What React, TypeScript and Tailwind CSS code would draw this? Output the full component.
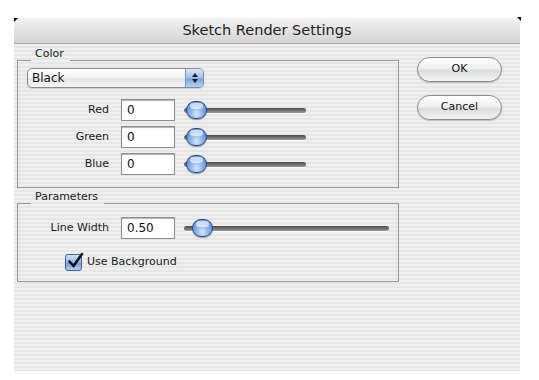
import React from 'react';

const font = { fontFamily: '"DejaVu Sans", "Liberation Sans", sans-serif' };

const Slider: React.FC<{ width: string; knob: string }> = ({ width, knob }) => (
  <div className={`relative ${width} h-[20px] flex items-center`}>
    <div className="w-full h-[5px] rounded-full bg-[linear-gradient(to_bottom,#4a4a4a,#7a7a7a_60%,#9a9a9a)] shadow-[0_1px_0_#fff]" />
    <div
      className={`absolute top-[1px] ${knob} w-[21px] h-[18px] rounded-full border border-[#2c4a85] bg-[radial-gradient(ellipse_at_50%_75%,#d6e8fb_0%,#8ab4ea_45%,#4f80cc_100%)] shadow-[0_1px_1px_rgba(0,0,0,0.35)]`}
    >
      <div className="mx-auto mt-[1px] w-[13px] h-[6px] rounded-full bg-white/60" />
    </div>
  </div>
);

const GroupBox: React.FC<{ title: string; labelWidth: string; height: string; children: React.ReactNode }> = ({
  title,
  labelWidth,
  height,
  children,
}) => (
  <div className="flex flex-col">
    <div className="flex items-end h-[14px]">
      <div className="w-[14px] h-px bg-[#9a9a9a]" />
      <span className={`${labelWidth} px-[4px] text-[11px] leading-[14px] text-[#1a1a1a]`}>{title}</span>
      <div className="flex-1 h-px bg-[#9a9a9a]" />
    </div>
    <div className={`${height} border-x border-b border-[#9a9a9a]`}>{children}</div>
  </div>
);

const Field: React.FC<{ value: string }> = ({ value }) => (
  <div className="w-[54px] h-[22px] bg-white border border-[#8c8c8c] shadow-[inset_0_1px_1px_rgba(0,0,0,0.3)] pl-[5px] flex items-center text-[12px] text-[#111]">
    {value}
  </div>
);

const ColorRow: React.FC<{ label: string }> = ({ label }) => (
  <div className="flex items-center h-[22px]">
    <span className="w-[91px] text-right text-[11px] text-[#1a1a1a]">{label}</span>
    <div className="ml-[12px]">
      <Field value="0" />
    </div>
    <div className="ml-[9px]">
      <Slider width="w-[122px]" knob="left-[2px]" />
    </div>
  </div>
);

const AquaButton: React.FC<{ label: string }> = ({ label }) => (
  <div className="w-[85px] h-[25px] rounded-full border border-[#8a8a8a] bg-[linear-gradient(to_bottom,#ffffff,#f0f0f0_45%,#dcdcdc_55%,#f4f4f4)] shadow-[0_1px_1px_rgba(0,0,0,0.2)] flex items-center justify-center text-[11px] text-[#111]">
    {label}
  </div>
);

export default function App() {
  return (
    <div className="w-[539px] h-[380px] bg-white pt-[18px] pl-[14px]" style={font}>
      <div className="relative w-[506px] h-[353px] flex flex-col">
        {/* title bar */}
        <div className="h-[26px] border-b border-[#a6a6a6] bg-[linear-gradient(to_bottom,#f2f2f2,#e2e2e2_50%,#d4d4d4)] flex items-center justify-center text-[14.5px] text-[#222]">
          Sketch Render Settings
        </div>
        <div className="absolute top-0 left-0 w-0 h-0 border-t-[4px] border-r-[4px] border-t-black border-r-transparent" />
        <div className="absolute top-[-1px] right-[-1px] w-0 h-0 border-t-[4px] border-l-[4px] border-t-black border-l-transparent" />

        {/* body */}
        <div className="flex-1 flex pl-[3px] pt-[3px] bg-[repeating-linear-gradient(to_bottom,#efefef_0px,#efefef_2px,#e6e6e6_2px,#e6e6e6_4px)]">
          <div className="w-[382px] flex flex-col">
            <GroupBox title="Color" labelWidth="w-[39px]" height="h-[127px]">
              <div className="pl-[9px] pt-[7px]">
                <div className="w-[177px] h-[20px] rounded-[5px] border border-[#8a8a8a] bg-[linear-gradient(to_bottom,#ffffff,#f1f1f1_50%,#e4e4e4_55%,#f6f6f6)] flex overflow-hidden shadow-[0_1px_1px_rgba(0,0,0,0.15)]">
                  <span className="flex-1 pl-[4px] text-[12px] leading-[18px] text-[#111]">Black</span>
                  <div className="w-[18px] border-l border-[#7d95bd] bg-[linear-gradient(to_bottom,#d7e6fa,#9dc0ee_50%,#7aa6e4_55%,#b6d2f5)] flex flex-col items-center justify-center gap-[2px]">
                    <div className="w-0 h-0 border-x-[3px] border-x-transparent border-b-[4px] border-b-[#1a1a1a]" />
                    <div className="w-0 h-0 border-x-[3px] border-x-transparent border-t-[4px] border-t-[#1a1a1a]" />
                  </div>
                </div>
              </div>
              <div className="mt-[11px] flex flex-col gap-[5px]">
                <ColorRow label="Red" />
                <ColorRow label="Green" />
                <ColorRow label="Blue" />
              </div>
            </GroupBox>

            <div className="mt-[2px]">
              <GroupBox title="Parameters" labelWidth="w-[73px]" height="h-[78px]">
                <div className="pt-[13px] flex items-center h-[35px]">
                  <span className="w-[91px] text-right text-[11px] text-[#1a1a1a]">Line Width</span>
                  <div className="ml-[12px]">
                    <Field value="0.50" />
                  </div>
                  <div className="ml-[9px]">
                    <Slider width="w-[205px]" knob="left-[8px]" />
                  </div>
                </div>
                <div className="mt-[15px] pl-[47px] flex items-center gap-[5px]">
                  <div className="relative w-[17px] h-[17px] rounded-[3px] border border-[#44608c] bg-[linear-gradient(to_bottom,#d4e4f8,#90b6ea_50%,#6f9ce0_55%,#b2cff4)]">
                    <svg className="absolute left-[1px] top-[-3px]" width="17" height="17" viewBox="0 0 17 17">
                      <path d="M2.5 9.5 L6.5 14 L15 2" fill="none" stroke="#111" strokeWidth="2.6" strokeLinecap="round" strokeLinejoin="round" />
                    </svg>
                  </div>
                  <span className="text-[11px] text-[#1a1a1a]">Use Background</span>
                </div>
              </GroupBox>
            </div>
          </div>

          <div className="ml-[18px] pt-[10px] flex flex-col gap-[13px]">
            <AquaButton label="OK" />
            <AquaButton label="Cancel" />
          </div>
        </div>
      </div>
    </div>
  );
}
